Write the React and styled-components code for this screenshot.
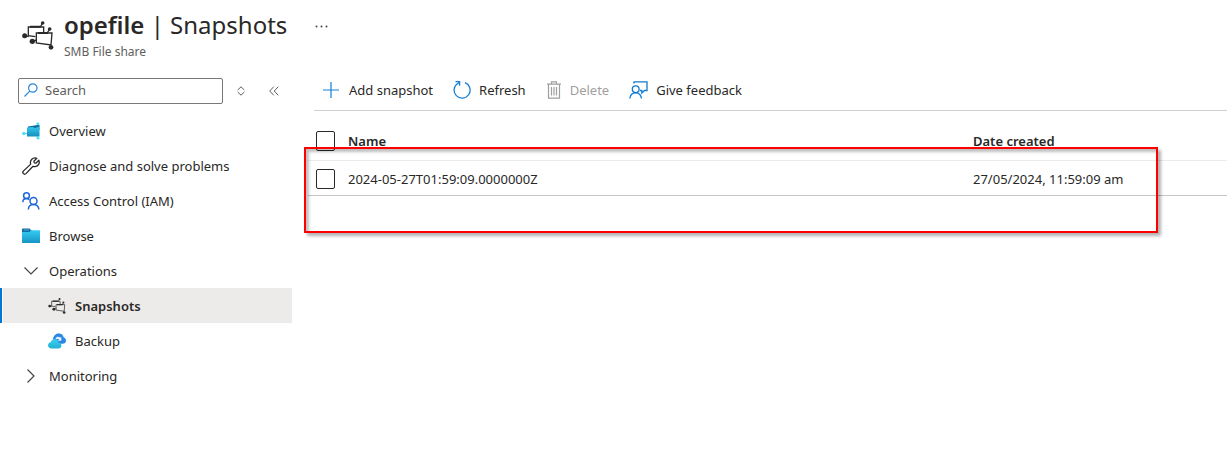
import React, { useState } from 'react'
import styled, { createGlobalStyle, css } from 'styled-components'

const GlobalStyle = createGlobalStyle`
* {
  box-sizing: border-box;
}
body {
  margin: 0;
  background: #fff;
  color: #292827;
  font-family: "Noto Sans", "Open Sans", sans-serif;
  font-size: 13px;
  line-height: 20px;
}
button, input {
  font: inherit;
  color: inherit;
}
`

const Header = styled.header`
display: flex;
align-items: flex-start;
padding: 8px 22px 0;
height: 78px;
`
const HeaderIcon = styled.div`
display: flex;
width: 42px;
padding-top: 13px;
`
const Title = styled.h1`
margin: 0;
font-size: 24px;
line-height: 34px;
font-weight: 400;
white-space: nowrap;
strong {
  font-weight: 600;
}
`
const Subtitle = styled.div`
font-size: 12px;
line-height: 20px;
color: #605e5c;
`
const MoreButton = styled.button`
display: flex;
margin: 13px 0 0 24px;
padding: 4px;
border: 0;
background: none;
`
const Body = styled.div`
display: flex;
align-items: flex-start;
`
const Sidebar = styled.aside`
flex: 0 0 292px;
`
const SearchRow = styled.div`
display: flex;
align-items: center;
padding-left: 18px;
margin-bottom: 9px;
`
const SearchBox = styled.label`
display: flex;
align-items: center;
gap: 7px;
width: 205px;
height: 26px;
padding: 0 5px 2px;
border: 1px solid #7a7876;
border-radius: 2px;
`
const SearchInput = styled.input`
flex: 1;
min-width: 0;
padding: 0;
border: 0;
outline: 0;
background: none;
&::placeholder {
  color: #605e5c;
  opacity: 1;
}
`
const SmallButton = styled.button`
display: flex;
align-items: center;
justify-content: center;
width: 24px;
height: 24px;
margin-left: ${props => props.$gap};
padding: 0;
border: 0;
background: none;
`
const NavList = styled.ul`
margin: 0;
padding: 0;
list-style: none;
`
const navRow = css`
display: flex;
align-items: center;
gap: 9px;
width: 100%;
height: 35px;
padding: 0 0 0 ${props => (props.$nested ? '45px' : '19px')};
border: 0;
border-left: 3px solid transparent;
background: none;
color: #292827;
text-decoration: none;
text-align: left;
svg {
  flex: none;
}
`
const NavLink = styled.a`
${navRow}
${props => props.$selected && css`
background: linear-gradient(to right, #0078d4 2px, #fff 2px, #fff 3px, #edebe9 3px) border-box;
font-weight: 600;
`}
`
const NavGroup = styled.button`
${navRow}
`
const Main = styled.main`
flex: 1;
min-width: 0;
padding-left: 16px;
`
const Toolbar = styled.div`
display: flex;
align-items: center;
gap: 20px;
height: 33px;
margin-left: 6px;
padding: 0 7px 8px;
border-bottom: 1px solid #d2d0ce;
`
const ToolButton = styled.button`
display: flex;
align-items: center;
gap: 8px;
padding: 0;
border: 0;
background: none;
white-space: nowrap;
&:disabled {
  color: #a19f9d;
}
`
const TableArea = styled.div`
position: relative;
`
const Table = styled.table`
width: 100%;
border-collapse: collapse;
table-layout: fixed;
`
const Row = styled.tr`
height: ${props => (props.$head ? '49px' : '35px')};
border-bottom: 1px solid ${props => (props.$head ? '#edebe9' : '#c8c6c4')};
`
const cell = css`
padding: ${props => (props.$head ? '12px 0 0' : '2px 0 0')};
text-align: left;
white-space: nowrap;
`
const HeadCell = styled.th`
${cell}
font-weight: 600;
`
const Cell = styled.td`
${cell}
`
const CheckCol = styled.col`
width: 40px;
`
const DateCol = styled.col`
width: 254px;
`
const Check = styled.input`
display: block;
appearance: none;
width: 19px;
height: 20px;
margin: 0 0 0 8px;
border: 1px solid #292827;
border-radius: 2px;
background: #fff;
&:checked {
  background: #0078d4;
}
`
const Highlight = styled.div`
position: absolute;
top: 36px;
left: -4px;
right: 69px;
height: 86px;
border: 2px solid #f00;
box-shadow: 3px 3px 3px rgba(0, 0, 0, .3), inset 3px 3px 3px rgba(0, 0, 0, .25);
pointer-events: none;
`

const SnapshotIcon = ({ width, height }) => (
  <svg width={width} height={height} viewBox="20 33 96 87" fill="none" stroke="#2b2b2b">
    <path d="M60 80 L39 77 L39 51 L85 51 L85 67" strokeWidth="4" />
    <path d="M44 50h30M68 69h30" strokeWidth="6" />
    <path d="M63 69 H110 L107 105 L63 99Z" strokeWidth="4" />
    <path d="M28 77 40 80M52 94 64 90M82 39 74 52M103 58 94 71" strokeWidth="4" />
    <g fill="#2b2b2b" stroke="none">
      <circle cx="28" cy="77" r="7.5" />
      <circle cx="51" cy="94" r="8" />
      <circle cx="82" cy="39" r="5.5" />
      <circle cx="103" cy="57" r="5.5" />
      <circle cx="107" cy="112" r="7" />
    </g>
  </svg>
)

const OverviewIcon = () => (
  <svg width="18" height="18" viewBox="0 0 18 18">
    <defs>
      <linearGradient id="share" x1="0" y1="0" x2="0" y2="1">
        <stop offset="0" stopColor="#32c8ee" />
        <stop offset="1" stopColor="#1490bd" />
      </linearGradient>
    </defs>
    <path d="M2 11.500h4M15.500 2v13" stroke="#5ad5f2" strokeWidth="1" />
    <path d="M6 4.500 12.500 3.500 17.500 2.800V8H6z" fill="#0f6a9c" />
    <path d="M5 5.500 11 5 12.500 6 17.500 4.800V14.500H5z" fill="url(#share)" />
    <g fill="#50e0fa">
      <circle cx="1.800" cy="11.500" r="1.800" />
      <circle cx="15.800" cy="1.800" r="1.500" />
      <circle cx="16" cy="16" r="1.600" />
    </g>
  </svg>
)

const WrenchIcon = () => (
  <svg width="18" height="18" viewBox="0 0 18 18" fill="none" stroke="#292827" strokeWidth="1.300" strokeLinejoin="round">
    <path d="M14.800 1.300 11.900 4.200 12.300 5.900 13.900 6.200 16.800 3.300C18 6 16.500 9.300 13.200 9.600 12.400 9.700 11.600 9.500 11 9.300L4 16.600C2.300 18.200-.2 15.900 1.300 14.100L8.700 7.100C7.500 3.300 10.800-.1 14.800 1.300z" />
  </svg>
)

const PeopleIcon = () => (
  <svg width="18" height="18" viewBox="0 0 18 18" fill="none" stroke="#1f67d8" strokeWidth="1.500">
    <circle cx="4.500" cy="3.700" r="2.900" />
    <path d="M.8 10.200C.9 8 2.400 6.600 4.500 6.600 5.800 6.600 6.700 7 7.300 7.700" />
    <circle cx="11.500" cy="9" r="3.500" />
    <path d="M6.300 17.500C6.500 14.500 8.500 12.600 11.500 12.600S16.600 14.500 16.900 17.500" />
  </svg>
)

const FolderIcon = () => (
  <svg width="18" height="18" viewBox="0 0 18 18">
    <defs>
      <linearGradient id="folder" x1="0" y1="0" x2="0" y2="1">
        <stop offset="0" stopColor="#33cdf2" />
        <stop offset="1" stopColor="#1795c5" />
      </linearGradient>
    </defs>
    <path d="M0 2.500C0 2 .4 1.500 1 1.500H7.500L9 3.200H10V8H0z" fill="#0f6fa8" />
    <path d="M0 5H7.500L9 3.200H17.500L18 3.700V16H0z" fill="url(#folder)" />
    <path d="M2 3h5" stroke="#5fa9d0" strokeWidth=".8" />
  </svg>
)

const BackupIcon = () => (
  <svg width="18" height="18" viewBox="0 0 18 18">
    <defs>
      <linearGradient id="cloud" x1="0" y1="0" x2="0" y2="1">
        <stop offset="0" stopColor="#3ccff2" />
        <stop offset="1" stopColor="#1fb0cf" />
      </linearGradient>
    </defs>
    <path d="M5 7C5.500 3.500 8 1.500 11 1.500 13.500 1.500 15.200 3 15.600 5.300 17 5.800 18 7 18 8.500 18 10.500 16.500 11.800 14.500 11.800H8z" fill="#2b87e3" />
    <path d="M7.500 6.500C8.300 4.800 10.800 4.200 12.200 5.700L13.300 4.800V8.800H9.800L11 7.300C10 6.300 9 6.800 8.500 7.500z" fill="#e6f3fd" />
    <path d="M3.500 16.500C1.500 16.500 0 15.200 0 13.300 0 11.600 1.200 10.400 2.700 10.200 3.100 8.300 4.500 7.300 6.500 7.300 8.700 7.300 10.200 8.600 10.500 10.500 12.300 10.700 13.400 11.800 13.400 13.500 13.400 15.300 12 16.500 10.200 16.500z" fill="url(#cloud)" />
  </svg>
)

const ChevronIcon = ({ open }) => (
  <svg width="18" height="18" viewBox="0 0 18 18" fill="none" stroke="#484644" strokeWidth="1.200">
    <path d={open ? 'M2.500 5.500 9 12 15.500 5.500' : 'M5.500 2.500 12 9 5.500 15.500'} />
  </svg>
)

const SearchIcon = () => (
  <svg width="14" height="14" viewBox="0 0 14 14" fill="none" stroke="#2b88d8" strokeWidth="1.200">
    <circle cx="8.800" cy="5" r="4.200" />
    <path d="M5.800 8.200.5 13.500" />
  </svg>
)

const AddIcon = () => (
  <svg width="20" height="18" viewBox="0 0 20 18" stroke="#1580d6" strokeWidth="1.200">
    <path d="M10 1v16M2 9h16" />
  </svg>
)

const RefreshIcon = () => (
  <svg width="18" height="20" viewBox="0 0 18 20" fill="none" stroke="#1580d6" strokeWidth="1.300">
    <path d="M12 2.600A8 8 0 1 1 5 3.200L6.600 2" />
    <path d="M2.500 1.600H6.600V5.800" />
  </svg>
)

const TrashIcon = () => (
  <svg width="16" height="18" viewBox="0 0 16 18" fill="none" stroke="#a19f9d" strokeWidth="1.200">
    <path d="M1 3.200H15M5.500 3V.8H10.500V3M2.500 3.500V17.200H13.500V3.500M5.500 6v8.500M8 6v8.500M10.500 6v8.500" />
  </svg>
)

const FeedbackIcon = () => (
  <svg width="19" height="18" viewBox="0 0 19 18" fill="none" stroke="#0f7bd2" strokeWidth="1.300">
    <path d="M5 2.500V.8H18V9.500H15.500L12.800 12V9.500H11" />
    <circle cx="6.700" cy="8.200" r="3.400" />
    <path d="M.8 17.500C1.200 14 3.300 11.800 6.700 11.800S12 14 12.500 17.500" />
  </svg>
)

const snapshots = [
  { name: '2024-05-27T01:59:09.0000000Z', created: '27/05/2024, 11:59:09 am' },
]

export default function App() {
  const [openOps, setOpenOps] = useState(true)
  const [openMon, setOpenMon] = useState(false)

  return (
    <>
      <GlobalStyle />
      <Header>
        <HeaderIcon><SnapshotIcon width={32} height={29} /></HeaderIcon>
        <div>
          <Title><strong>opefile</strong> | Snapshots</Title>
          <Subtitle>SMB File share</Subtitle>
        </div>
        <MoreButton aria-label="More">
          <svg width="14" height="3" viewBox="0 0 14 3" fill="#484644">
            <circle cx="1.500" cy="1.500" r="1" />
            <circle cx="6.500" cy="1.500" r="1" />
            <circle cx="11.500" cy="1.500" r="1" />
          </svg>
        </MoreButton>
      </Header>
      <Body>
        <Sidebar>
          <SearchRow>
            <SearchBox>
              <SearchIcon />
              <SearchInput type="text" placeholder="Search" aria-label="Search" />
            </SearchBox>
            <SmallButton $gap="6px" aria-label="Expand or collapse all">
              <svg width="8" height="10" viewBox="0 0 8 10" fill="none" stroke="#605e5c">
                <path d="M.7 4 4 .8 7.300 4M.7 6 4 9.200 7.300 6" />
              </svg>
            </SmallButton>
            <SmallButton $gap="9px" aria-label="Hide menu">
              <svg width="10" height="10" viewBox="0 0 10 10" fill="none" stroke="#605e5c">
                <path d="M4.800.7.700 5 4.800 9.300M9.300.7 5.200 5 9.300 9.300" />
              </svg>
            </SmallButton>
          </SearchRow>
          <nav>
            <NavList>
              <li><NavLink href="#overview"><OverviewIcon />Overview</NavLink></li>
              <li><NavLink href="#diagnose"><WrenchIcon />Diagnose and solve problems</NavLink></li>
              <li><NavLink href="#iam"><PeopleIcon />Access Control (IAM)</NavLink></li>
              <li><NavLink href="#browse"><FolderIcon />Browse</NavLink></li>
              <li>
                <NavGroup aria-expanded={openOps} onClick={() => setOpenOps(!openOps)}>
                  <ChevronIcon open={openOps} />Operations
                </NavGroup>
                {openOps && (
                  <NavList>
                    <li>
                      <NavLink href="#snapshots" $nested $selected>
                        <SnapshotIcon width={18} height={16} />Snapshots
                      </NavLink>
                    </li>
                    <li><NavLink href="#backup" $nested><BackupIcon />Backup</NavLink></li>
                  </NavList>
                )}
              </li>
              <li>
                <NavGroup aria-expanded={openMon} onClick={() => setOpenMon(!openMon)}>
                  <ChevronIcon open={openMon} />Monitoring
                </NavGroup>
              </li>
            </NavList>
          </nav>
        </Sidebar>
        <Main>
          <Toolbar>
            <ToolButton><AddIcon />Add snapshot</ToolButton>
            <ToolButton><RefreshIcon />Refresh</ToolButton>
            <ToolButton disabled><TrashIcon />Delete</ToolButton>
            <ToolButton><FeedbackIcon />Give feedback</ToolButton>
          </Toolbar>
          <TableArea>
            <Table>
              <colgroup>
                <CheckCol />
                <col />
                <DateCol />
              </colgroup>
              <thead>
                <Row $head>
                  <HeadCell $head><Check type="checkbox" aria-label="Select all" /></HeadCell>
                  <HeadCell $head>Name</HeadCell>
                  <HeadCell $head>Date created</HeadCell>
                </Row>
              </thead>
              <tbody>
                {snapshots.map(s => (
                  <Row key={s.name}>
                    <Cell><Check type="checkbox" aria-label={s.name} /></Cell>
                    <Cell>{s.name}</Cell>
                    <Cell>{s.created}</Cell>
                  </Row>
                ))}
              </tbody>
            </Table>
            <Highlight />
          </TableArea>
        </Main>
      </Body>
    </>
  )
}
